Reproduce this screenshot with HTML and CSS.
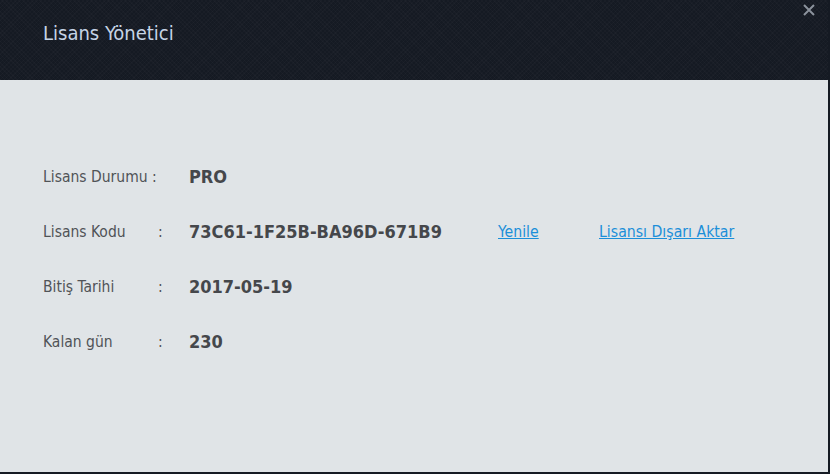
FILE: index.html
```html
<!DOCTYPE html>
<html lang="tr">
<head>
<meta charset="utf-8">
<title>Lisans Yönetici</title>
<link rel="stylesheet" href="styles.css">
</head>
<body>
<div class="window">
  <header class="titlebar">
    <h1 class="title">Lisans Yönetici</h1>
    <button class="close" aria-label="Kapat">
      <svg width="12" height="12" viewBox="0 0 12 12"><path d="M1 1L11 11M11 1L1 11" stroke="#8b929c" stroke-width="2"/></svg>
    </button>
  </header>
  <main class="content">
    <div class="row">
      <span class="label wide">Lisans Durumu :</span>
      <span class="value">PRO</span>
    </div>
    <div class="row">
      <span class="label">Lisans Kodu</span>
      <span class="colon">:</span>
      <span class="value">73C61-1F25B-BA96D-671B9</span>
      <a class="link" href="#">Yenile</a>
      <a class="link" href="#">Lisansı Dışarı Aktar</a>
    </div>
    <div class="row">
      <span class="label">Bitiş Tarihi</span>
      <span class="colon">:</span>
      <span class="value">2017-05-19</span>
    </div>
    <div class="row">
      <span class="label">Kalan gün</span>
      <span class="colon">:</span>
      <span class="value">230</span>
    </div>
  </main>
</div>
</body>
</html>
```
FILE: styles.css
```css
html, body {
  margin: 0;
  padding: 0;
  background: #151a23;
}
body {
  width: 830px;
  height: 474px;
  font-family: "DejaVu Sans Condensed", "DejaVu Sans", sans-serif;
}
.window {
  width: 828px;
  height: 472px;
  display: flex;
  flex-direction: column;
  background: #e0e4e7;
}
.titlebar {
  position: relative;
  height: 80px;
  flex: none;
  background-color: #151a23;
  background-image: repeating-linear-gradient(45deg, rgba(255,255,255,0.018) 0 1px, transparent 1px 3px),
                    repeating-linear-gradient(-45deg, rgba(255,255,255,0.018) 0 1px, transparent 1px 3px);
  display: flex;
  align-items: flex-start;
}
.title {
  margin: 20px 0 0 43px;
  font-size: 20px;
  font-weight: normal;
  color: #c6d4e6;
  line-height: 26px;
}
.close {
  position: absolute;
  top: 4px;
  right: 13px;
  padding: 0;
  border: 0;
  background: none;
  width: 12px;
  height: 12px;
  display: flex;
}
.content {
  padding: 69px 0 0 43px;
  display: flex;
  flex-direction: column;
}
.row {
  display: grid;
  grid-template-columns: 115px 31px 309px 101px auto;
  align-items: center;
  height: 55px;
  color: #4a4d52;
}
.label {
  font-size: 15.5px;
  color: #505357;
}
.label.wide {
  grid-column: 1 / span 2;
}
.colon {
  font-size: 15.5px;
  color: #505357;
}
.value {
  font-size: 18px;
  font-weight: bold;
  color: #45474b;
}
.link {
  font-size: 15.7px;
  color: #1b8fd9;
  text-decoration: underline;
}
```
